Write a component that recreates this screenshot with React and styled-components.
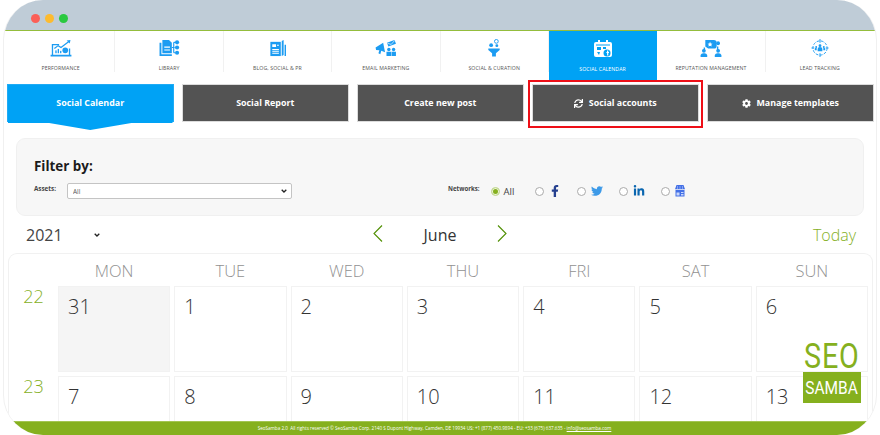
import React from 'react';
import styled, { createGlobalStyle } from 'styled-components';
import { FaSync, FaCog, FaFacebookF, FaTwitter, FaLinkedinIn } from 'react-icons/fa';

const Global = createGlobalStyle`
  html, body { margin: 0; padding: 0; background: #fff; }
  body { width: 880px; height: 435px; overflow: hidden; font-family: "Open Sans", "Liberation Sans", sans-serif; }
  * { box-sizing: border-box; }
`;

const caret = "url(\"data:image/svg+xml,%3Csvg xmlns='http://www.w3.org/2000/svg' width='6' height='4' viewBox='0 0 6 4'%3E%3Cpath d='M.7.7L3 3l2.300-2.300' fill='none' stroke='%23222' stroke-width='1.300'/%3E%3C/svg%3E\")";

const Window = styled.div`
  position: relative;
  width: 874px;
  height: 435px;
  margin-left: 3px;
  border-radius: 40px;
  overflow: hidden;
  display: flex;
  flex-direction: column;
  background: #fff;
  border-right: 1px solid #f0f0f0;
  border-left: 1px solid #f0f0f0;
`;
const TitleBar = styled.div`
  flex: none;
  height: 30px;
  margin: 0 -1px;
  background: #bfccd7;
  display: flex;
  align-items: center;
  gap: 5px;
  padding: 6px 0 0 27.500px;
`;
const Dot = styled.span`
  width: 9px;
  height: 9px;
  border-radius: 50%;
  background: ${p => p.$color};
`;
const Nav = styled.nav`
  flex: none;
  height: 50px;
  margin: 0 -1px;
  border-top: 1px solid #94bd3c;
  padding: 0 3px 0 4px;
  display: grid;
  grid-template-columns: repeat(8, 1fr);
`;
const NavItem = styled.div`
  display: flex;
  flex-direction: column;
  align-items: center;
  padding-top: 8px;
  height: ${p => (p.$active ? '49px' : '41px')};
  background: ${p => (p.$active ? '#00a2f5' : 'transparent')};
  color: ${p => (p.$active ? '#fff' : '#555')};
  border-right: 1px solid ${p => (p.$active ? 'transparent' : '#f1f1f1')};
  &:last-child { border-right: 0; }
  svg { display: block; width: 24px; height: 19px; color: ${p => (p.$active ? '#fff' : '#1c9cf2')}; }
`;
const NavLabel = styled.span`
  margin-top: 7px;
  font-size: 5.200px;
  line-height: 8px;
  letter-spacing: 0.1px;
  text-transform: uppercase;
  white-space: nowrap;
`;
const Actions = styled.div`
  flex: none;
  display: grid;
  grid-template-columns: repeat(5, 166.500px);
  column-gap: 8.500px;
  padding: 4px 0 0 4px;
  margin-left: -1px;
`;
const ActionButton = styled.button`
  position: relative;
  height: 38px;
  padding: 0;
  font: 700 8.900px/1 "Open Sans", sans-serif;
  color: #fff;
  background: ${p => (p.$active ? '#00a2f5' : '#535353')};
  border: 1px solid ${p => (p.$active ? '#1fabf5' : '#dcdcdc')};
  border-radius: 0;
  display: flex;
  align-items: center;
  justify-content: center;
  gap: 6px;
  svg { width: 9px; height: 9px; }
  ${p => p.$active && `
    &::after {
      content: "";
      position: absolute;
      left: 0; right: 0; top: 36px;
      height: 9px;
      background: #00a2f5;
      clip-path: polygon(0 0, 100% 0, 100% 2px, 75% 2px, 50% 100%, 25% 2px, 0 2px);
    }`}
  ${p => p.$marked && `
    &::before {
      content: "";
      position: absolute;
      inset: -5px -5px -7px -5px;
      border: 2px solid #ee0f17;
      pointer-events: none;
    }`}
`;
const FilterPanel = styled.section`
  flex: none;
  margin: 16px 12px 0 12px;
  height: 78px;
  background: #f7f7f7;
  border: 1px solid #f0f0f0;
  border-radius: 9px;
  padding: 18px 17px 0 17px;
`;
const FilterTitle = styled.h2`
  margin: 0;
  font-size: 13.400px;
  line-height: 19px;
  font-weight: 700;
  color: #1c1c1c;
`;
const FilterRow = styled.div`
  display: flex;
  align-items: center;
  margin-top: 7px;
  height: 16px;
`;
const SmallLabel = styled.span`
  font-size: ${p => p.$size || 6.3}px;
  font-weight: 700;
  color: #444;
  position: relative;
  top: -3px;
`;
const AssetSelect = styled.select`
  appearance: none;
  width: 225px;
  height: 16px;
  margin: 0 156px 0 11px;
  font: 6.500px "Open Sans", sans-serif;
  color: #555;
  background: #fff ${caret} no-repeat right 4px center;
  border: 1px solid #c4c4c4;
  border-radius: 2px;
  padding: 0 0 0 5px;
`;
const Networks = styled.div`
  display: flex;
  align-items: center;
  margin-left: 11px;
`;
const Network = styled.label`
  display: flex;
  align-items: center;
  gap: 5px;
  width: 42.300px;
  height: 16px;
  font-size: 9.500px;
  color: #444;
  &:first-child { width: 44px; gap: 4px; }
`;
const Radio = styled.span`
  flex: none;
  width: 9px;
  height: 9px;
  border-radius: 50%;
  background: ${p => (p.$on ? '#85b01e' : '#fff')};
  border: 1px solid ${p => (p.$on ? '#cfe0a8' : '#aaa')};
  box-shadow: ${p => (p.$on ? 'inset 0 0 0 1px #eef4dd' : 'none')};
`;
const Glyph = styled.span`
  display: flex;
  color: ${p => p.$color};
  font-size: ${p => p.$size}px;
  svg { display: block; }
`;
const MonthRow = styled.div`
  flex: none;
  height: 37px;
  display: grid;
  grid-template-columns: 344px 1fr 110px;
  align-items: center;
  padding: 0 20px 0 18px;
`;
const YearSelect = styled.select`
  appearance: none;
  width: 80px;
  height: 24px;
  border: 0;
  padding: 1px 0 0 4px;
  background: transparent ${caret} no-repeat right 2px center;
  font: 16px "Open Sans", sans-serif;
  color: #444;
`;
const MonthNav = styled.div`
  display: flex;
  align-items: center;
  margin-left: 7px;
  width: 134px;
  justify-content: space-between;
  color: #4f8e00;
  svg { display: block; position: relative; top: -1px; }
`;
const MonthName = styled.span`
  font-size: 16px;
  color: #333;
`;
const Today = styled.span`
  justify-self: end;
  font-size: 16px;
  font-weight: 300;
  color: #85b01e;
`;
const Calendar = styled.section`
  flex: 1;
  min-height: 0;
  overflow: hidden;
  margin: 0 0 0 4px;
  width: 865px;
  border: 1px solid #f1f1f1;
  border-bottom: 0;
  border-radius: 9px 9px 0 0;
  padding: 0 4px 0 0;
  display: grid;
  grid-template-columns: 45px repeat(7, 1fr);
  grid-template-rows: 28px 86px 86px;
  gap: 4px;
`;
const DayName = styled.div`
  font-size: 16.500px;
  font-weight: 300;
  color: #919191;
  text-align: center;
  line-height: 34px;
  height: 28px;
`;
const WeekNo = styled.div`
  font-size: 18px;
  font-weight: 300;
  color: #85b01e;
  text-align: center;
  line-height: 20px;
  margin-left: 4px;
`;
const Cell = styled.div`
  border: 1px solid #f2f2f2;
  background: ${p => (p.$muted ? '#f5f5f5' : '#fff')};
  font-size: 20px;
  font-weight: 300;
  color: #333;
  padding: 5px 0 0 9px;
  line-height: 30px;
`;
const Footer = styled.footer`
  flex: none;
  height: 14px;
  margin: 0 -1px;
  background: #85b01e;
  border-top: 1px solid #a3c552;
  color: #fff;
  font-size: 4.600px;
  line-height: 12px;
  text-align: center;
  white-space: nowrap;
  padding-right: 11px;
  a { color: #fff; text-decoration: underline; }
`;
const Logo = styled.div`
  position: absolute;
  left: 799px;
  top: 343px;
  width: 58px;
  display: flex;
  flex-direction: column;
  align-items: center;
  font-family: "Roboto", "Liberation Sans", sans-serif;
`;
const LogoTop = styled.span`
  display: block;
  font-size: 35px;
  font-weight: 400;
  line-height: 27px;
  letter-spacing: 1px;
  color: #85b01e;
  transform: scaleX(0.82);
`;
const LogoBox = styled.span`
  display: flex;
  align-items: center;
  justify-content: center;
  margin-top: 2px;
  width: 58px;
  height: 31px;
  background: #85b01e;
  color: #fff;
  font-size: 18px;
  font-weight: 400;
  span { transform: scaleX(0.86); }
`;

const I = ({ children }) => <svg viewBox="0 0 24 19" fill="currentColor" aria-hidden="true">{children}</svg>;

const IconPerf = () => <I>
  <path d="M3 17V6h7" fill="none" stroke="currentColor" strokeWidth="1.400" />
  <path d="M21 10v7" fill="none" stroke="currentColor" strokeWidth="1.400" />
  <path d="M1 16.500h22V18.500H1z" />
  <path d="M5 10l4-3 3 2 8-6" fill="none" stroke="currentColor" strokeWidth="1.300" />
  <path d="M18 1.500l4-.5-.8 3.800z" />
  <rect x="6" y="12" width="1.400" height="3" /><rect x="8.500" y="10.500" width="1.400" height="4.500" /><rect x="11" y="12.500" width="1.400" height="2.500" />
  <circle cx="16.500" cy="12" r="3" />
</I>;
const IconLib = () => <I>
  <path d="M2 4h2v12h11v2H2z" /><path d="M5 1h7l3 3v11H5z" />
  <path d="M7 8h6v1.200H7zM7 11h6v1.200H7z" fill="#fff" />
  <path d="M15 9h3M17 3.500v11M17 3.500h1.500M17 14.500h1.500" stroke="currentColor" strokeWidth="1.200" fill="none" />
  <circle cx="20.500" cy="3.500" r="2.200" /><circle cx="20.500" cy="9" r="2.200" /><circle cx="20.500" cy="14.500" r="2.200" />
</I>;
const IconBlog = () => <I>
  <path d="M5 3h11v15H5z" />
  <path d="M7 5.500h4v3H7zM7 10.500h7v1H7zM7 12.500h7v1H7zM7 14.500h7v1H7zM12 6h2v1h-2z" fill="#fff" />
  <path d="M17 2l2-1v16l-2 1zM20 6h1.500v12H20z" />
</I>;
const IconEmail = () => <I>
  <path d="M1 9l8-5 2 10-4-1.500-1 3.500-2-1 1-3-3.500-.5z" />
  <path d="M13 4l8-3 1.500 4-8 3z" />
  <path d="M13.500 4.500l4 1.200 3.500-4" stroke="#fff" strokeWidth=".7" fill="none" />
  <circle cx="15" cy="11" r="1.800" /><circle cx="20" cy="11" r="1.800" />
  <path d="M12.500 13.500h5V18h-5zM18 13.500h4.500V18H18z" />
</I>;
const IconFunnel = () => <I>
  <circle cx="9" cy="6.500" r="2" /><circle cx="14.500" cy="2.500" r="2" fill="none" stroke="currentColor" strokeWidth="1" /><circle cx="15" cy="7" r="1.500" />
  <path d="M6 10h12v1.500l-4 3.500v3.500h-4V15l-4-3.500z" />
</I>;
const IconCal = () => <I>
  <path d="M5 3h14a2 2 0 0 1 2 2v11a2 2 0 0 1-2 2H5a2 2 0 0 1-2-2V5a2 2 0 0 1 2-2z" />
  <path d="M7 1h2v3H7zM15 1h2v3h-2z" />
  <path d="M5 6h14" stroke="#00a2f5" strokeWidth="1" />
  <path d="M6 8h4v3H6zM12 8h3v2h-3zM6 13l3 0-1 3z" fill="#00a2f5" />
  <circle cx="16" cy="14" r="3.500" fill="#00a2f5" /><path d="M16 11.500h1.300v1.500H18v1h-.7v2.500h-1.200V14h-.7v-1h.6z" />
</I>;
const IconRep = () => <I>
  <path d="M6 1h9a3 3 0 0 1 3 3v3a3 3 0 0 1-3 3H9L6 8z" />
  <path d="M11 3l.8 1.700 1.800.2-1.300 1.200.4 1.800-1.700-.9-1.700.9.4-1.800-1.300-1.200 1.800-.2z" fill="#fff" />
  <circle cx="19.500" cy="4.500" r="2" />
  <path d="M5 9v3H3M19 8v4h2" fill="none" stroke="currentColor" strokeWidth="1.500" />
  <circle cx="4.500" cy="12.500" r="2" /><circle cx="19.500" cy="12.500" r="2" />
  <path d="M1 19v-2a3 3 0 0 1 3-2h1a3 3 0 0 1 3 2v2zM16 19v-2a3 3 0 0 1 3-2h1a3 3 0 0 1 3 2v2z" />
</I>;
const IconLead = () => <I>
  <circle cx="12" cy="9.500" r="7.500" fill="none" stroke="currentColor" strokeWidth="1" strokeDasharray="3 1.500" />
  <path d="M12 0v4M12 15v4M3 9.500h3M18 9.500h3" stroke="currentColor" strokeWidth="1" />
  <circle cx="12" cy="7" r="1.500" /><path d="M9.500 13v-2.500a2.500 2 0 0 1 5 0V13z" />
  <circle cx="8" cy="8.500" r="1" /><circle cx="16" cy="8.500" r="1" />
  <path d="M6.500 12v-1.500a1.500 1.500 0 0 1 2-1v2.500zM17.500 12v-1.500a1.500 1.500 0 0 0-2-1v2.500z" />
</I>;
const IconStore = () => <svg width="10" height="12" viewBox="0 0 10 12" fill="#4470e6" aria-hidden="true">
  <path d="M1.500 0h7L10 4.200H0z" />
  <path d="M.5 5h9v6.500h-9z" />
  <path d="M2.500 1v3M5 1v3M7.500 1v3" stroke="#c9d7fb" strokeWidth=".5" />
  <path d="M1.500 7.500h3v3h-3zM6 7h2.500v1H6zM6 9h2.500v1.500H6z" fill="#c9d7fb" />
</svg>;

const Chevron = ({ dir }) => <svg width="10" height="17" viewBox="0 0 10 17" fill="none" stroke="currentColor" strokeWidth="1.100" aria-hidden="true">
  <path d={dir === 'left' ? 'M9 .5L1 8.500l8 8' : 'M1 .5l8 8-8 8'} />
</svg>;

const tabs = [
  ['Performance', IconPerf], ['Library', IconLib], ['Blog, Social & PR', IconBlog], ['Email Marketing', IconEmail],
  ['Social & Curation', IconFunnel], ['Social Calendar', IconCal], ['Reputation Management', IconRep], ['Lead Tracking', IconLead],
];
const days = ['MON', 'TUE', 'WED', 'THU', 'FRI', 'SAT', 'SUN'];

export default function App() {
  return (
    <>
      <Global />
      <Window>
        <TitleBar>
          <Dot $color="#fb5f57" /><Dot $color="#fdbb2e" /><Dot $color="#2ac940" />
        </TitleBar>
        <Nav>
          {tabs.map(([label, Icon]) => (
            <NavItem key={label} $active={label === 'Social Calendar'}>
              <Icon />
              <NavLabel>{label}</NavLabel>
            </NavItem>
          ))}
        </Nav>
        <Actions>
          <ActionButton $active>Social Calendar</ActionButton>
          <ActionButton>Social Report</ActionButton>
          <ActionButton>Create new post</ActionButton>
          <ActionButton $marked><FaSync />Social accounts</ActionButton>
          <ActionButton><FaCog />Manage templates</ActionButton>
        </Actions>
        <FilterPanel>
          <FilterTitle>Filter by:</FilterTitle>
          <FilterRow>
            <SmallLabel>Assets:</SmallLabel>
            <AssetSelect defaultValue="All"><option>All</option></AssetSelect>
            <SmallLabel $size={6.1}>Networks:</SmallLabel>
            <Networks>
              <Network><Radio $on />All</Network>
              <Network><Radio /><Glyph $color="#25408f" $size={12}><FaFacebookF /></Glyph></Network>
              <Network><Radio /><Glyph $color="#3d9ae8" $size={12}><FaTwitter /></Glyph></Network>
              <Network><Radio /><Glyph $color="#0a66b0" $size={12}><FaLinkedinIn /></Glyph></Network>
              <Network><Radio /><Glyph><IconStore /></Glyph></Network>
            </Networks>
          </FilterRow>
        </FilterPanel>
        <MonthRow>
          <YearSelect defaultValue="2021"><option>2021</option></YearSelect>
          <MonthNav>
            <Chevron dir="left" />
            <MonthName>June</MonthName>
            <Chevron dir="right" />
          </MonthNav>
          <Today>Today</Today>
        </MonthRow>
        <Calendar>
          <span />
          {days.map(d => <DayName key={d}>{d}</DayName>)}
          <WeekNo>22</WeekNo>
          {[31, 1, 2, 3, 4, 5, 6].map(n => <Cell key={n} $muted={n === 31}>{n}</Cell>)}
          <WeekNo>23</WeekNo>
          {[7, 8, 9, 10, 11, 12, 13].map(n => <Cell key={n}>{n}</Cell>)}
        </Calendar>
        <Footer>
          SeoSamba 2.0&nbsp; All rights reserved © SeoSamba Corp. 2140 S Dupont Highway, Camden, DE 19934 US: +1 (877) 450.9894 - EU: +33 (675) 637.635 - <a href="#mail">info@seosamba.com</a>
        </Footer>
        <Logo>
          <LogoTop>SEO</LogoTop>
          <LogoBox><span>SAMBA</span></LogoBox>
        </Logo>
      </Window>
    </>
  );
}
